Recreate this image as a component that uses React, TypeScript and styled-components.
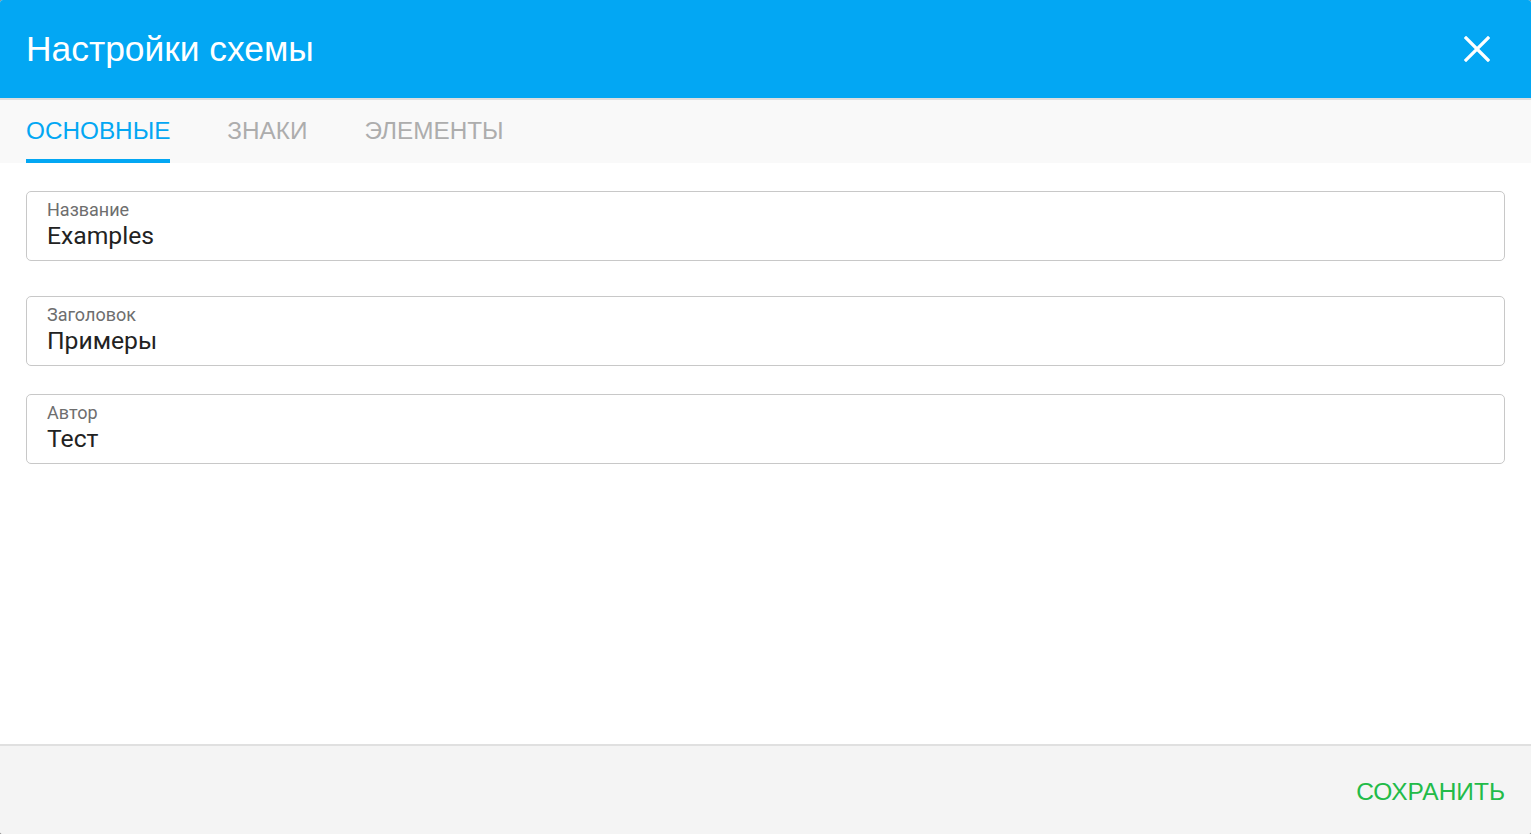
import React, { useState } from "react";
import styled, { createGlobalStyle } from "styled-components";

const GlobalStyle = createGlobalStyle`
  html, body, #root { margin: 0; padding: 0; height: 100%; }
  body { background: #8a8a8a; font-family: "Liberation Sans", Arial, sans-serif; }
  * { box-sizing: border-box; }
`;

const Dialog = styled.div`
  height: 100vh;
  display: flex;
  flex-direction: column;
  background: #ffffff;
  border-radius: 3px;
  overflow: hidden;
`;

const Header = styled.header`
  height: 100px;
  flex: 0 0 auto;
  display: flex;
  align-items: center;
  justify-content: space-between;
  padding: 0 34px 0 26px;
  background: #03a7f3;
  border-bottom: 2px solid #dedede;
`;

const Title = styled.h1`
  margin: 0;
  font-family: "Liberation Sans", Arial, sans-serif;
  font-weight: 400;
  font-size: 35.4px;
  color: #ffffff;
`;

const CloseButton = styled.button`
  width: 40px;
  height: 40px;
  display: flex;
  align-items: center;
  justify-content: center;
  border: none;
  background: transparent;
  padding: 0;
  cursor: pointer;
`;

const TabBar = styled.nav`
  height: 63px;
  flex: 0 0 auto;
  display: flex;
  gap: 57px;
  padding: 0 26px;
  background: #f9f9f9;
`;

const Tab = styled.button<{ $active?: boolean }>`
  border: none;
  background: transparent;
  padding: 3px 0 0 0;
  display: flex;
  align-items: center;
  font-family: "Liberation Sans", Arial, sans-serif;
  font-size: 24.3px;
  color: ${(p) => (p.$active ? "#03a7f3" : "#adadad")};
  border-bottom: 4px solid ${(p) => (p.$active ? "#03a7f3" : "transparent")};
  cursor: pointer;
`;

const Content = styled.main`
  flex: 1 1 auto;
  display: flex;
  flex-direction: column;
  gap: 28px;
  padding: 28px 26px 0 26px;
`;

const Field = styled.label<{ $extra?: number }>`
  display: flex;
  flex-direction: column;
  height: 70px;
  padding: 8px 20px 0 20px;
  border: 1px solid #c8c8c8;
  border-radius: 5px;
  margin-bottom: ${(p) => p.$extra ?? 0}px;
`;

const FieldLabel = styled.span`
  font-family: Roboto, "Liberation Sans", sans-serif;
  font-size: 18px;
  line-height: 20px;
  color: #6e6e6e;
`;

const FieldValue = styled.input`
  border: none;
  outline: none;
  padding: 0;
  background: transparent;
  font-family: Roboto, "Liberation Sans", sans-serif;
  font-size: 24.7px;
  line-height: 31px;
  height: 31px;
  color: #222222;
`;

const Footer = styled.footer`
  height: 90px;
  flex: 0 0 auto;
  display: flex;
  align-items: center;
  justify-content: flex-end;
  padding: 4px 26px 0 26px;
  background: #f4f4f4;
  border-top: 2px solid #e0e0e0;
`;

const SaveButton = styled.button`
  border: none;
  background: transparent;
  padding: 0;
  font-family: "Liberation Sans", Arial, sans-serif;
  font-size: 24.5px;
  color: #22bb48;
  cursor: pointer;
`;

const tabs = ["ОСНОВНЫЕ", "ЗНАКИ", "ЭЛЕМЕНТЫ"];

export default function App() {
  const [active, setActive] = useState(0);
  return (
    <>
      <GlobalStyle />
      <Dialog>
        <Header>
          <Title>Настройки схемы</Title>
          <CloseButton aria-label="Закрыть">
            <svg width="26" height="26" viewBox="0 0 26 26">
              <path d="M2 2 L24 24 M24 2 L2 24" stroke="#ffffff" strokeWidth="3.2" strokeLinecap="square" />
            </svg>
          </CloseButton>
        </Header>
        <TabBar>
          {tabs.map((t, i) => (
            <Tab key={t} $active={i === active} onClick={() => setActive(i)}>
              {t}
            </Tab>
          ))}
        </TabBar>
        <Content>
          <Field $extra={7}>
            <FieldLabel>Название</FieldLabel>
            <FieldValue defaultValue="Examples" />
          </Field>
          <Field>
            <FieldLabel>Заголовок</FieldLabel>
            <FieldValue defaultValue="Примеры" />
          </Field>
          <Field>
            <FieldLabel>Автор</FieldLabel>
            <FieldValue defaultValue="Тест" />
          </Field>
        </Content>
        <Footer>
          <SaveButton>СОХРАНИТЬ</SaveButton>
        </Footer>
      </Dialog>
    </>
  );
}
